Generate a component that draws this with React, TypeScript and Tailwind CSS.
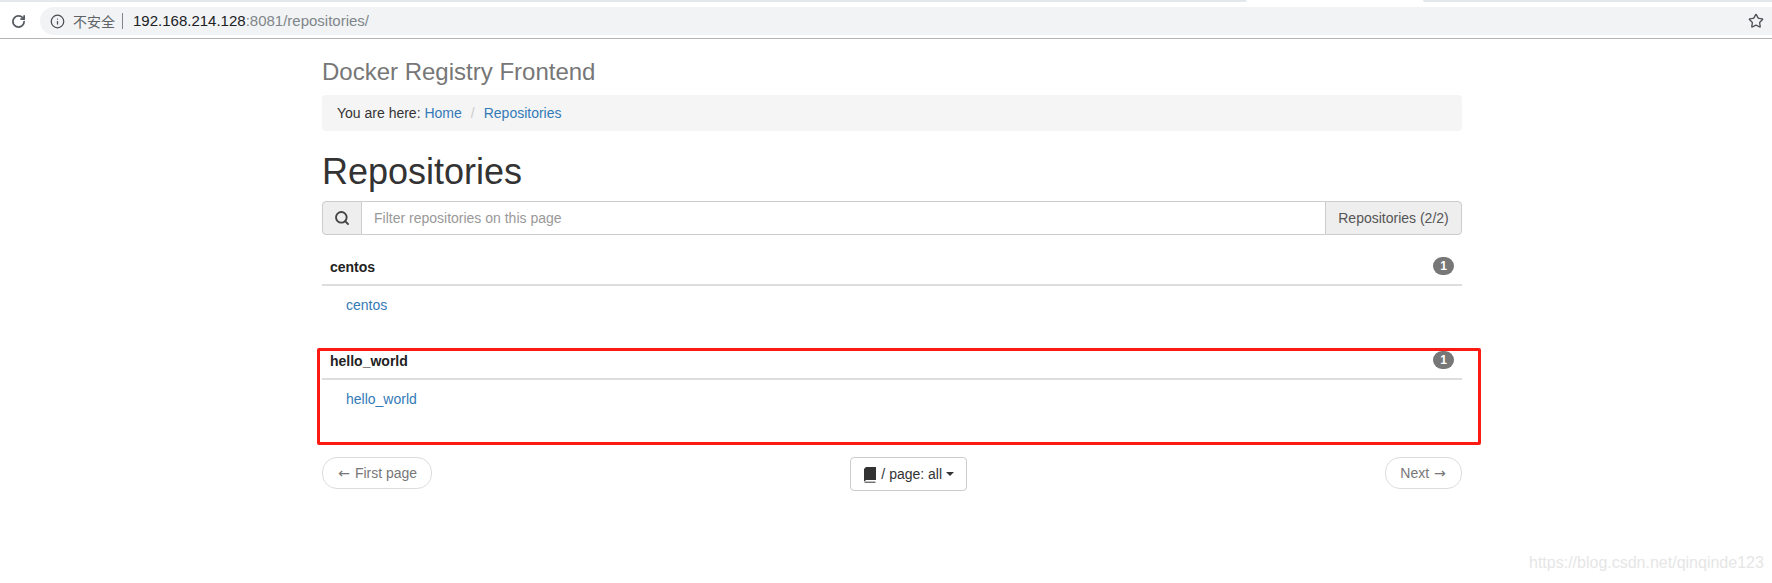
import { Info, RotateCw, Search, Star } from "lucide-react";

type Repo = { name: string; count: number };

const repos: Repo[] = [
  { name: "centos", count: 1 },
  { name: "hello_world", count: 1 },
];

function BrowserBar() {
  return (
    <header className="h-[39px] border-b border-[#b4b4b4] bg-white">
      <div className="flex h-[2px]">
        <div className="w-[1247px] rounded-br-sm bg-[#e4e8ec]" />
        <div className="w-[176px]" />
        <div className="flex-1 rounded-bl-sm bg-[#e4e8ec]" />
      </div>
      <div className="flex h-[36px] items-center pt-[2px]">
        <div className="flex w-[40px] justify-center pr-[4px]">
          <RotateCw size={15} strokeWidth={2.8} className="text-[#555a60]" />
        </div>
        <div className="flex h-[28px] flex-1 items-center rounded-l-full rounded-r-[10px] bg-[#f1f3f4] pl-[10px] pr-[8px] text-[15px]">
          <Info size={15} strokeWidth={2} className="text-[#4a4d50]" />
          <span className="ml-[8px] text-[14px] text-[#5f6368] [font-family:'Noto_Sans_CJK_SC',sans-serif]">不安全</span>
          <span className="ml-[7px] mr-[10px] h-[16px] w-px bg-[#80868b]" />
          <span className="text-[#202124]">192.168.214.128</span>
          <span className="text-[#80868b]">:8081/repositories/</span>
          <Star size={16} strokeWidth={2} className="ml-auto text-[#4f5256]" />
        </div>
      </div>
    </header>
  );
}

function RepoGroup({ repo }: { repo: Repo }) {
  return (
    <section className="h-[94px]">
      <div className="flex h-[36px] items-center justify-between border-b-2 border-[#dddddd] px-2 pb-[1px]">
        <span className="font-bold text-[#222222]">{repo.name}</span>
        <span className="mb-[2px] rounded-[10px] bg-[#777777] px-[7px] py-[3px] text-[12px] font-bold leading-none text-white">{repo.count}</span>
      </div>
      <div className="pl-6 pt-[9px]">
        <a className="text-[#337ab7]">{repo.name}</a>
      </div>
    </section>
  );
}

function PagerLink({ children }: { children: React.ReactNode }) {
  return (
    <a className="flex h-[32px] items-center rounded-[15px] border border-[#dddddd] px-[14px] text-[#777777]">{children}</a>
  );
}

function Arrow({ glyph }: { glyph: string }) {
  return <span className="inline-block w-[14px] text-center [font-family:'DejaVu_Sans',sans-serif]">{glyph}</span>;
}

export default function App() {
  return (
    <div className="relative h-[583px] overflow-hidden bg-white text-[14px] leading-[20px] text-[#333333] [font-family:'Liberation_Sans',Arial,sans-serif]">
      <BrowserBar />

      <main className="relative ml-[322px] w-[1140px] pt-[20px]">
        <h3 className="text-[24px] leading-[26px] text-[#777777]">Docker Registry Frontend</h3>
        <div className="mt-[10px] h-[36px] rounded bg-[#f5f5f5] px-[15px] py-[8px]">
          You are here: <a className="text-[#337ab7]">Home</a>
          <span className="px-[9px] text-[#cccccc]">/</span>
          <a className="text-[#337ab7]">Repositories</a>
        </div>

        <h1 className="mt-[21px] text-[36px] leading-[40px] text-[#333333]">Repositories</h1>

        <div className="mt-[9px] flex h-[34px]">
          <span className="flex w-[40px] items-center justify-center rounded-l border border-[#cccccc] bg-[#eeeeee]">
            <Search size={16} strokeWidth={2.8} className="text-[#444444]" />
          </span>
          <div className="flex flex-1 items-center border-y border-[#cccccc] px-3 text-[#999999]">Filter repositories on this page</div>
          <span className="flex w-[137px] items-center justify-center rounded-r border border-[#cccccc] bg-[#eeeeee] text-[#555555]">Repositories (2/2)</span>
        </div>

        <div className="mt-[15px]">
          {repos.map((repo) => (
            <RepoGroup key={repo.name} repo={repo} />
          ))}
        </div>

        <nav className="mt-[19px] flex items-start justify-between">
          <PagerLink>
            <Arrow glyph="←" />&nbsp;First page
          </PagerLink>
          <button className="flex h-[34px] items-center rounded border border-[#cccccc] px-3 text-[#333333]">
            <svg width="14" height="17" viewBox="0 0 14 17" className="mr-[4px]">
              <path d="M1 3 3 1h10v13H3.2L1 15.5z" fill="#333333" />
              <path d="M1.5 16.2h11" stroke="#333333" strokeWidth="1" />
            </svg>
            / page: all
            <span className="ml-[4px] h-0 w-0 border-x-[4px] border-t-[4px] border-x-transparent border-t-[#333333]" />
          </button>
          <PagerLink>
            Next&nbsp;<Arrow glyph="→" />
          </PagerLink>
        </nav>

        {/* hand drawn annotation from the screenshot */}
        <div className="absolute left-[-5px] top-[309px] h-[97px] w-[1164px] rounded-[2px] border-[3px] border-[#fc1a12]" />
      </main>

      <span className="absolute left-[1529px] top-[553px] text-[16px] leading-[20px] text-[#e6e6e6]">https://blog.csdn.net/qinqinde123</span>
    </div>
  );
}
